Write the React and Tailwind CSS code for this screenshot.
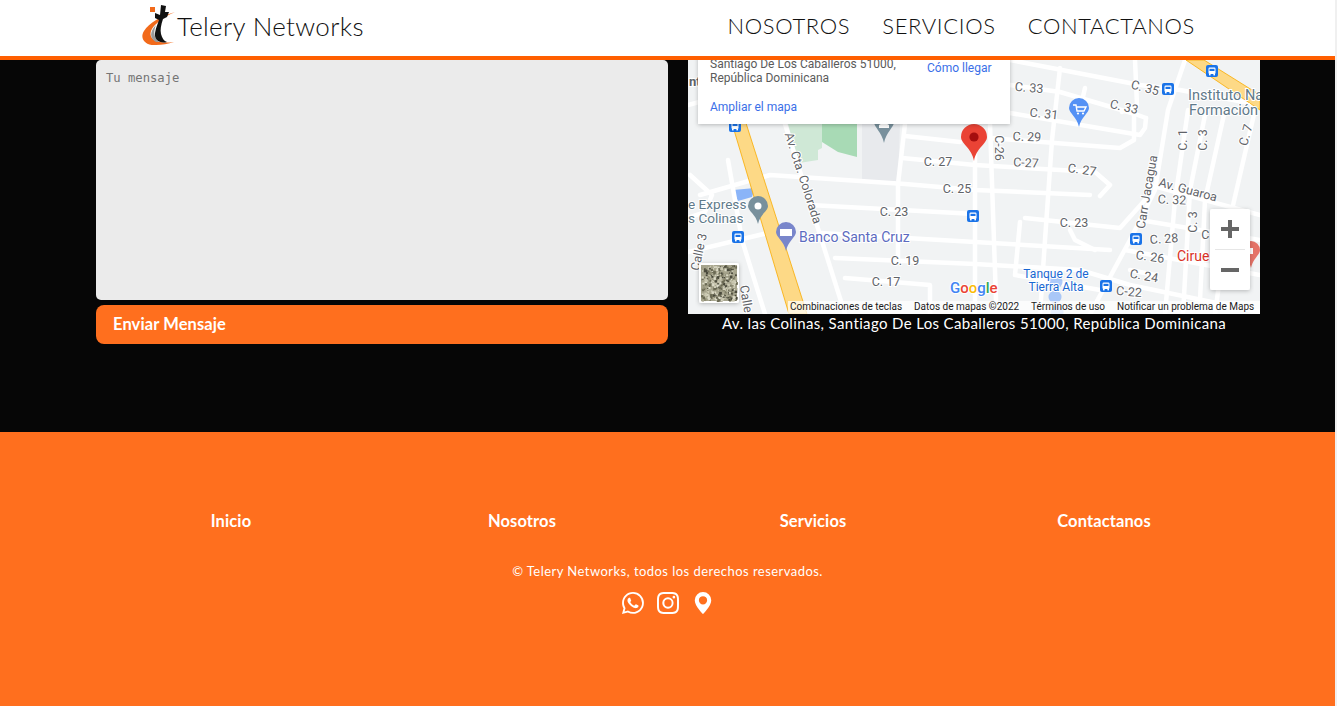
const FONT = { fontFamily: '"Lato", "Open Sans", sans-serif' };
import { BsWhatsapp, BsInstagram, BsGeoAltFill } from "react-icons/bs";

const roads = [
  "M688 105 L735 92", "M690 175 L712 195 L705 212 L688 218",
  "M700 195 L770 175 L905 184 L975 190 L1090 195", "M688 252 L772 232", "M820 233 L975 242 L1110 250",
  "M810 205 L975 214", "M835 258 L975 264 L1080 270 L1130 285 L1260 312", "M845 278 L930 285 L930 314",
  "M785 124 L845 314", "M742 240 L765 314", "M728 160 L742 240",
  "M905 124 L898 184 L898 260", "M975 124 L975 314", "M905 136 L960 142", "M902 158 L975 165 L1095 172 L1110 185 L1100 196",
  "M1010 85 L1060 92 L1135 114 L1146 118", "M1010 113 L1140 135 L1145 128 L1146 118", "M990 138 L1120 148 L1134 140 L1134 115",
  "M1060 68 L1052 140 L1045 240 L1040 314", "M990 124 L996 300", "M1010 60 L1140 85 L1180 90 L1260 105", "M1135 60 L1137 105 L1122 112",
  "M1085 88 L1080 110", "M1185 60 L1168 110 L1155 190 L1130 240 L1090 314",
  "M1188 110 L1175 200 L1165 314", "M1205 115 L1190 190 L1183 314", "M1225 110 L1205 200 L1200 300", "M1255 110 L1225 240 L1215 314",
  "M1140 220 L1260 240", "M1150 185 L1260 215", "M1125 250 L1260 275", "M1025 218 L1120 228 L1145 200",
  "M1070 230 L1075 240 L1095 250", "M1020 222 L1015 275 L1100 290", "M1130 270 L1155 275",
];

const labels = [
  ["C. 33", 1029, 92, 5], ["C. 33", 1124, 111, 13], ["C. 35", 1145, 92, 15], ["C. 31", 1044, 118, 6], ["C. 29", 1027, 141, 2],
  ["C-26", 999, 152, 90], ["C-27", 1026, 167, 3], ["C. 27", 1082, 174, 8], ["C. 1", 1183, 144, -90], ["C. 3", 1203, 144, -90],
  ["C. 7", 1246, 139, -75], ["C. 27", 938, 166, 0], ["C. 25", 957, 193, 0], ["C. 23", 894, 216, 0], ["C. 23", 1074, 227, 0],
  ["C. 19", 905, 265, 0], ["C. 17", 886, 286, 0], ["C. 32", 1172, 204, 3], ["C. 3", 1193, 226, -90], ["C. 28", 1164, 243, -4],
  ["C. 26", 1150, 261, 8], ["C. 24", 1144, 280, 10], ["C-22", 1129, 296, 5], ["C.", 1207, 239, 0], ["Av. Guaroa", 1188, 194, 15],
  ["Av. Cta. Colorada", 803, 182, 72], ["Calle 3", 699, 256, -78], ["Calle", 746, 303, 80], ["Carr Jacagua", 1147, 196, -80],
];

const buses = [[735, 126], [1212, 71], [1168, 89], [973, 216], [738, 237], [1136, 239], [1106, 286]];

const rnd = (n) => {
  const v = Math.sin(n * 12.9898) * 43758.5453;
  return v - Math.floor(v);
};
const speckles = Array.from({ length: 420 }, (_, i) => ({
  x: 701 + rnd(i + 1) * 34.5,
  y: 265 + rnd(i + 500) * 34.5,
  s: 1 + rnd(i + 900) * 2,
  c: ["#6b6a54", "#c9c7b0", "#8f8d74", "#4a4a3c", "#dcdbc8", "#a9a78f"][Math.floor(rnd(i + 1300) * 6)],
}));

function Bus({ x, y }) {
  return (
    <g>
      <rect x={x - 6} y={y - 6} width="12" height="12" rx="2" fill="#1a73e8" />
      <rect x={x - 3.5} y={y - 3.5} width="7" height="6.5" rx="1.2" fill="#fff" />
      <rect x={x - 2.5} y={y - 2.2} width="5" height="2.2" fill="#1a73e8" />
      <rect x={x - 3} y={y + 3} width="1.6" height="1.4" fill="#fff" />
      <rect x={x + 1.4} y={y + 3} width="1.6" height="1.4" fill="#fff" />
    </g>
  );
}

function Pin({ x, y, fill, r = 10, h = 27 }) {
  return (
    <path d={`M${x} ${y + h} C${x - 2} ${y + h * 0.66} ${x - r} ${y + r * 1.5} ${x - r} ${y + r} A${r} ${r} 0 1 1 ${x + r} ${y + r} C${x + r} ${y + r * 1.5} ${x + 2} ${y + h * 0.66} ${x} ${y + h}Z`} fill={fill} />
  );
}

function MapDrawing() {
  return (
    <svg viewBox="688 60 572 254" className="block w-full h-[254px]" style={{ fontFamily: "Roboto, sans-serif" }}>
      <defs>
        <filter id="cardShadow" x="-10%" y="-10%" width="120%" height="130%">
          <feDropShadow dx="0" dy="1" stdDeviation="2" floodColor="#000" floodOpacity="0.25" />
        </filter>
      </defs>
      <rect x="688" y="60" width="572" height="254" fill="#f1f3f4" />
      <path d="M788 124 H822 V148 L818 150 V160 L799 163Z" fill="#cfe8d6" />
      <path d="M822 124 H857 V157 L838 152 L822 142Z" fill="#a8dab5" />
      <path d="M862 124 H900 L898 182 L862 180Z" fill="#e8eaed" />
      <path d="M733 190 L755 188 L752 197 L738 201Z" fill="#8ab4f8" />
      <g fill="none" stroke="#fff" strokeWidth="4.5" strokeLinecap="round" strokeLinejoin="round">
        {roads.map((d) => <path key={d} d={d} />)}
      </g>
      <path d="M731 120 L745 120 L807 314 L789 314Z" fill="#fdd986" stroke="#f9ab00" strokeWidth="0.8" />
      <path d="M1186 60 L1204 60 L1260 95 L1260 110Z" fill="#fdd986" stroke="#f9ab00" strokeWidth="0.8" />
      {labels.map(([t, x, y, r], i) => (
        <text key={i} x={x} y={y} transform={`rotate(${r} ${x} ${y - 4})`} textAnchor="middle" fontSize="12.5" fill="#5f6368" stroke="#fff" strokeWidth="2" paintOrder="stroke">{t}</text>
      ))}
      {buses.map(([x, y]) => <Bus key={x} x={x} y={y} />)}

      <Pin x={1079} y={98} fill="#5491f5" r={10} h={29} />
      <path d="M1073 105 H1076 L1077 111 H1084 L1086 107 H1077" fill="none" stroke="#fff" strokeWidth="1.4" />
      <circle cx="1078" cy="113.5" r="1.1" fill="#fff" /><circle cx="1083" cy="113.5" r="1.1" fill="#fff" />

      <Pin x={758} y={196} fill="#78909c" r={10} h={28} />
      <circle cx="758" cy="206" r="3.5" fill="#fff" />
      <Pin x={786} y={222} fill="#7986cb" r={10} h={29} />
      <rect x="780" y="229" width="12" height="7" fill="#fff" />
      <Pin x={884} y={112} fill="#78909c" r={10} h={31} />
      <path d="M879 125 L884 122 L889 125 V128 H879Z" fill="#fff" />
      <Pin x={974} y={124} fill="#ea4335" r={13} h={37} />
      <circle cx="974" cy="137" r="4.6" fill="#a50e0e" />
      <Pin x={1251} y={241} fill="#e57368" r={9} h={27} />
      <rect x="1247" y="248" width="6" height="6" fill="#fff" />
      <circle cx="1056" cy="282" r="6.5" fill="#8ab4f8" opacity=".7" />
      <circle cx="1055" cy="297" r="6.5" fill="#8ab4f8" opacity=".7" />
      <circle cx="1057" cy="312" r="6.5" fill="#8ab4f8" opacity=".7" />

      <g stroke="#fff" strokeWidth="2" paintOrder="stroke">
        <text x="689" y="86" fontSize="13" fontWeight="700" fill="#5f6368">nt</text>
        <text x="1188" y="100" fontSize="14.5" fill="#5f7a8a">Instituto Na</text>
        <text x="1189" y="115" fontSize="14.5" fill="#5f7a8a">Formación T</text>
        <text x="688" y="209" fontSize="13.6" fill="#5f7a8a">e Express</text>
        <text x="688" y="223" fontSize="13.6" fill="#5f7a8a">s Colinas</text>
        <text x="799" y="242" fontSize="14" fill="#5c6bc0">Banco Santa Cruz</text>
        <text x="1177" y="261" fontSize="14" fill="#d93025">Cirue</text>
        <text x="1056" y="278" textAnchor="middle" fontSize="12" fill="#1967d2">Tanque 2 de</text>
        <text x="1056" y="291" textAnchor="middle" fontSize="12" fill="#1967d2">Tierra Alta</text>
      </g>

      <rect x="698" y="50" width="312" height="74" fill="#fff" filter="url(#cardShadow)" />
      <text x="710" y="68" fontSize="12" fill="#5b5b5b">Santiago De Los Caballeros 51000,</text>
      <text x="710" y="82" fontSize="12" fill="#5b5b5b">República Dominicana</text>
      <text x="927" y="72" fontSize="12" fill="#3a6fe8">Cómo llegar</text>
      <text x="710" y="111" fontSize="12" fill="#3a6fe8">Ampliar el mapa</text>

      <rect x="699" y="263" width="40" height="40" rx="2" fill="#fff" filter="url(#cardShadow)" />
      <rect x="701" y="265" width="36" height="36" fill="#a5a38c" />
      {speckles.map((s, i) => <rect key={i} x={s.x} y={s.y} width={s.s} height={s.s} fill={s.c} />)}

      <rect x="1210" y="209" width="40" height="81" rx="2" fill="#fff" filter="url(#cardShadow)" />
      <rect x="1215" y="249" width="30" height="1" fill="#e6e6e6" />
      <path d="M1221 229 H1239 M1230 220 V238" stroke="#666" strokeWidth="4" />
      <path d="M1221 270 H1239" stroke="#666" strokeWidth="4" />

      <text x="950" y="293" fontSize="15" fontWeight="500" stroke="#fff" strokeWidth="2" paintOrder="stroke">
        <tspan fill="#4285f4">G</tspan><tspan fill="#ea4335">o</tspan><tspan fill="#fbbc05">o</tspan><tspan fill="#4285f4">g</tspan><tspan fill="#34a853">l</tspan><tspan fill="#ea4335">e</tspan>
      </text>

      <rect x="788" y="301" width="472" height="13" fill="#fff" opacity=".72" />
      <g fontSize="10" fill="#1b1b1b">
        <text x="790" y="310">Combinaciones de teclas</text>
        <text x="914" y="310">Datos de mapas ©2022</text>
        <text x="1031" y="310">Términos de uso</text>
        <text x="1117" y="310">Notificar un problema de Maps</text>
      </g>
    </svg>
  );
}

function Logo() {
  return (
    <svg width="35" height="42" viewBox="0 0 35 42" className="shrink-0">
      <path d="M34 7 C20 11 8 18 3 26 C-2 34 5 41 15 40 C21 40 27 39 33 37 C24 38 15 38 11 33 C8 29 10 24 14 20 C19 15 27 10 34 7Z" fill="#f26a1b" />
      <path d="M15 37 C8 33 9 26 15 20 C12 27 13 33 18 37Z" fill="#9a9a9a" />
      <rect x="9" y="2" width="5" height="5" fill="#f26a1b" />
      <path d="M20 0 L25 1 L24 7 L28 7 L26 12 L22 14 C20 20 19 25 20 29 C21 33 23 36 26 37 C19 39 13 35 14 28 C15 22 17 18 18 15 L14 13 L14 8 L19 10Z" fill="#111" />
    </svg>
  );
}

const links = ["Inicio", "Nosotros", "Servicios", "Contactanos"];

export default function App() {
  return (
    <div className="flex h-[706px] w-full overflow-hidden bg-[#f0f0f0]" style={FONT}>
      <div className="w-[1335px] shrink-0 flex flex-col">
        <header className="h-[60px] shrink-0 bg-white border-b-4 border-[#ff5f00] flex items-center pl-[141px] pr-[140px] pb-[4px] justify-between">
          <div className="flex items-center gap-[1px]">
            <Logo />
            <span className="text-[26px] font-light text-[#111] tracking-[0.33px]">Telery Networks</span>
          </div>
          <nav className="flex gap-[32px] pb-[2px] text-[22px] font-light text-[#111] tracking-[0.65px]">
            <span>NOSOTROS</span>
            <span>SERVICIOS</span>
            <span>CONTACTANOS</span>
          </nav>
        </header>

        <main className="h-[372px] shrink-0 bg-[#060606] pl-[96px] pr-[75px] grid grid-cols-2 gap-[20px] content-start">
          <div className="flex flex-col gap-[5px]">
            <div className="h-[240px] bg-[#ebebeb] rounded-[5px] px-[10px] py-[10px] leading-[16px] text-[#757575]" style={{ fontFamily: '"DejaVu Sans Mono", monospace', fontSize: 12.2 }}>
              Tu mensaje
            </div>
            <div className="h-[39px] bg-[#ff6f1e] rounded-[8px] px-[17px] pb-[1px] flex items-center text-white font-bold text-[16.5px] tracking-[0.1px]">
              Enviar Mensaje
            </div>
          </div>
          <div>
            <MapDrawing />
            <p className="text-center text-white text-[15px] leading-[18px] tracking-[0.36px]">
              Av. las Colinas, Santiago De Los Caballeros 51000, República Dominicana
            </p>
          </div>
        </main>

        <footer className="flex-1 bg-[#ff6f1e] text-white flex flex-col items-center pt-[79px]">
          <div className="w-[1164px] grid grid-cols-4 text-center font-bold text-[16.5px] leading-[20px] tracking-[0.1px]">
            {links.map((l) => <span key={l}>{l}</span>)}
          </div>
          <p className="mt-[32px] text-[13px] leading-[16px] tracking-[0.46px]">© Telery Networks, todos los derechos reservados.</p>
          <div className="flex gap-[13px] mt-[13px] text-[22px]">
            <BsWhatsapp />
            <BsInstagram />
            <BsGeoAltFill />
          </div>
        </footer>
      </div>
    </div>
  );
}
